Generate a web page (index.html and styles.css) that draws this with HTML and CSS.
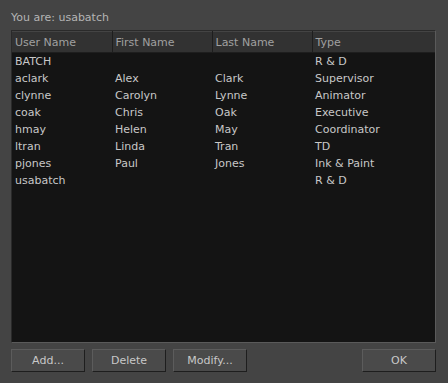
FILE: index.html
```html
<!DOCTYPE html>
<html lang="en">
<head>
    <meta charset="UTF-8">
    <title>Users</title>
    <link rel="stylesheet" href="styles.css">
</head>
<body>
    <div class="dialog">
        <div class="who">You are: usabatch</div>

        <div class="list">
            <table>
                <thead>
                    <tr>
                        <th>User Name</th>
                        <th>First Name</th>
                        <th>Last Name</th>
                        <th>Type</th>
                    </tr>
                </thead>
                <tbody>
                    <tr><td>BATCH</td><td></td><td></td><td>R &amp; D</td></tr>
                    <tr><td>aclark</td><td>Alex</td><td>Clark</td><td>Supervisor</td></tr>
                    <tr><td>clynne</td><td>Carolyn</td><td>Lynne</td><td>Animator</td></tr>
                    <tr><td>coak</td><td>Chris</td><td>Oak</td><td>Executive</td></tr>
                    <tr><td>hmay</td><td>Helen</td><td>May</td><td>Coordinator</td></tr>
                    <tr><td>ltran</td><td>Linda</td><td>Tran</td><td>TD</td></tr>
                    <tr><td>pjones</td><td>Paul</td><td>Jones</td><td>Ink &amp; Paint</td></tr>
                    <tr><td>usabatch</td><td></td><td></td><td>R &amp; D</td></tr>
                </tbody>
            </table>
        </div>

        <div class="buttons">
            <button class="btn">Add...</button>
            <button class="btn">Delete</button>
            <button class="btn">Modify...</button>
            <span class="spacer"></span>
            <button class="btn">OK</button>
        </div>
    </div>
</body>
</html>
```

FILE: styles.css
```css
body {
    margin: 0;
    background-color: #444444;
    font-family: "DejaVu Sans", sans-serif;
    font-size: 11px;
    color: #c8c8c8;
}

.dialog {
    width: 448px;
    height: 383px;
    box-sizing: border-box;
    padding: 10px 12px 11px 11px;
    display: flex;
    flex-direction: column;
}

.who {
    height: 20px;
    line-height: 16px;
    color: #b4b4b4;
}

.list {
    flex: 1;
    background-color: #141414;
    border-top: 1px solid #2a2a2a;
    border-left: 1px solid #2a2a2a;
    border-right: 1px solid #5a5a5a;
    border-bottom: 1px solid #5a5a5a;
    overflow: hidden;
}

table {
    width: 100%;
    border-collapse: collapse;
}

th {
    background-color: #323232;
    color: #a0a0a0;
    font-weight: normal;
    text-align: left;
    height: 21px;
    padding: 0 3px;
    border-right: 1px solid #1e1e1e;
    border-bottom: 1px solid #1e1e1e;
    border-top: 1px solid #444;
    box-sizing: border-box;
    width: 100px;
}

th:last-child {
    width: auto;
    border-right: none;
}

td {
    height: 17px;
    padding: 0 3px;
    white-space: nowrap;
}

tbody tr:first-child td {
    padding-top: 0;
}

.buttons {
    display: flex;
    gap: 7px;
    margin-top: 6px;
}

.spacer {
    flex: 1;
}

.btn {
    width: 74px;
    height: 23px;
    background-color: #4a4a4a;
    color: #c8c8c8;
    font-family: "DejaVu Sans", sans-serif;
    font-size: 11px;
    border-top: 1px solid #5c5c5c;
    border-left: 1px solid #5c5c5c;
    border-right: 1px solid #1e1e1e;
    border-bottom: 1px solid #1e1e1e;
    padding: 0;
}
```
